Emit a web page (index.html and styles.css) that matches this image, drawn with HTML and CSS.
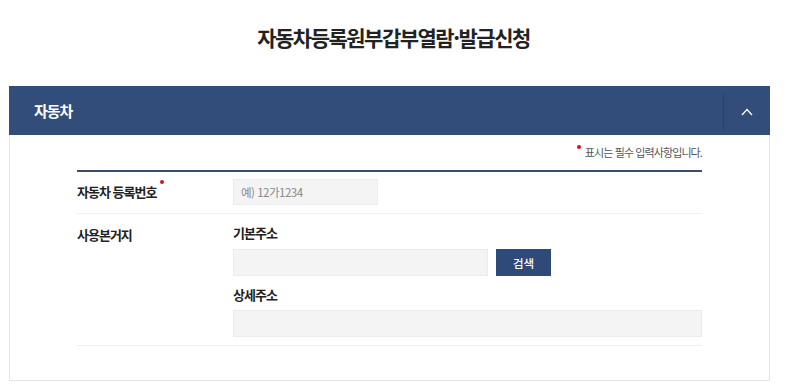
FILE: index.html
```html
<!DOCTYPE html>
<html lang="ko">
<head>
<meta charset="utf-8">
<link rel="stylesheet" href="styles.css">
</head>
<body>
<h1 class="page-title">자동차등록원부갑부열람·발급신청</h1>
<section class="panel">
  <div class="panel-head">
    <h2 class="panel-title">자동차</h2>
    <button class="toggle" type="button" aria-label="접기">
      <svg width="12" height="8" viewBox="0 0 12 8"><path d="M1 7 L6 1.5 L11 7" fill="none" stroke="#fff" stroke-width="1.3"/></svg>
    </button>
  </div>
  <div class="panel-body">
    <p class="req-note"><span class="dot"></span>표시는 필수 입력사항입니다.</p>
    <div class="form">
      <div class="row row-first">
        <div class="label">자동차 등록번호<span class="dot dot-label"></span></div>
        <div class="field">
          <input class="input input-sm" type="text" placeholder="예) 12가1234">
        </div>
      </div>
      <div class="row row-addr">
        <div class="label">사용본거지</div>
        <div class="field">
          <div class="sub-label">기본주소</div>
          <div class="inline">
            <input class="input input-md" type="text">
            <button class="btn" type="button">검색</button>
          </div>
          <div class="sub-label sub-label-2">상세주소</div>
          <input class="input input-lg" type="text">
        </div>
      </div>
    </div>
  </div>
</section>
</body>
</html>
```
FILE: styles.css
```css
* { box-sizing: border-box; }
body {
  margin: 0;
  background: #fff;
  font-family: "Noto Sans CJK KR", "Noto Sans", sans-serif;
  color: #222;
}
.page-title {
  margin: 0;
  padding-top: 22px;
  height: 86px;
  text-align: center;
  font-size: 21px;
  line-height: 30px;
  font-weight: 700;
  letter-spacing: -1.5px;
  color: #222;
}
.panel {
  margin-left: 9px;
  width: 761px;
}
.panel-head {
  height: 49px;
  background: #324d7a;
  display: flex;
  align-items: center;
  justify-content: space-between;
}
.panel-title {
  margin: 0 0 0 25px;
  font-size: 15px;
  font-weight: 700;
  color: #fff;
  letter-spacing: -1px;
}
.toggle {
  width: 47px;
  height: 38px;
  border: 0;
  border-left: 1px solid #2a426b;
  background: transparent;
  display: flex;
  align-items: center;
  justify-content: center;
  padding: 0;
  margin-top: 2px;
}
.panel-body {
  border: 1px solid #e4e4e4;
  border-top: 0;
  padding: 0 67px 34px 67px;
  height: 246px;
}
.req-note {
  margin: 0;
  padding-top: 8px;
  height: 35px;
  text-align: right;
  font-size: 11px;
  line-height: 18px;
  letter-spacing: -0.9px;
  color: #555;
}
.dot {
  display: inline-block;
  width: 4px;
  height: 4px;
  border-radius: 50%;
  background: #d7141b;
  vertical-align: top;
  margin-right: 4px;
  position: relative;
  top: 2px;
}
.form {
  border-top: 2px solid #3b4c6b;
}
.row {
  display: grid;
  grid-template-columns: 156px 1fr;
  border-bottom: 1px solid #efefef;
}
.row-first {
  padding: 7px 0 8px;
}
.row-addr {
  padding: 9px 0 8px;
}
.label {
  font-size: 13px;
  font-weight: 700;
  line-height: 26px;
  letter-spacing: -1px;
  color: #222;
}
.row-addr .label { margin-top: -1px; }
.dot-label {
  margin-left: 4px;
  top: 1px;
  vertical-align: top;
}
.sub-label {
  font-size: 13px;
  font-weight: 700;
  line-height: 20px;
  letter-spacing: -1px;
  color: #222;
  margin-bottom: 6px;
}
.sub-label-2 { margin-top: 9px; margin-bottom: 5px; }
.inline {
  display: flex;
  gap: 8px;
}
.input {
  display: block;
  height: 27px;
  border: 1px solid #ececec;
  background: #f4f4f4;
  font-family: inherit;
  font-size: 11.5px;
  padding: 0 7px;
  color: #333;
  outline: none;
}
.input::placeholder { color: #888; letter-spacing: -0.5px; }
.input-sm { width: 145px; height: 26px; }
.input-md { width: 255px; }
.input-lg { width: 100%; }
.btn {
  width: 55px;
  height: 27px;
  border: 0;
  background: #2f4a78;
  color: #fff;
  font-family: inherit;
  font-size: 11.5px;
  font-weight: 500;
  padding: 0;
}
```
